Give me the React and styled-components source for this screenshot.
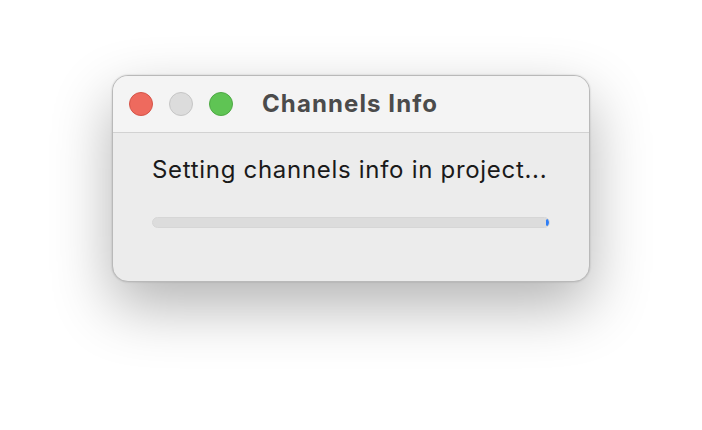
import React from 'react'
import styled, { createGlobalStyle } from 'styled-components'

const GlobalStyle = createGlobalStyle`
  html, body {
    margin: 0;
    padding: 0;
    background: #ffffff;
    font-family: Inter, "Liberation Sans", sans-serif;
  }
`

const Page = styled.div`
  width: 702px;
  height: 430px;
  display: flex;
  justify-content: center;
  align-items: flex-start;
  padding-top: 75px;
  box-sizing: border-box;
`

const Window = styled.div`
  width: 478px;
  height: 207px;
  box-sizing: border-box;
  border-radius: 16px;
  border: 1px solid #b9b9b9;
  background: #ececec;
  box-shadow: 0 24px 60px rgba(0, 0, 0, 0.3), 0 0 2px rgba(0, 0, 0, 0.2);
  overflow: hidden;
  display: flex;
  flex-direction: column;
`

const TitleBar = styled.div`
  height: 56px;
  flex-shrink: 0;
  background: #f4f4f4;
  border-bottom: 1px solid #d2d2d2;
  display: flex;
  align-items: center;
  padding-left: 16px;
`

const Lights = styled.div`
  display: flex;
  gap: 16px;
`

const Light = styled.span`
  width: 24px;
  height: 24px;
  border-radius: 50%;
  box-sizing: border-box;
  background: ${p => p.$bg};
  border: 1px solid ${p => p.$edge};
`

const Title = styled.div`
  margin-left: 29px;
  font-size: 24px;
  line-height: 30px;
  font-weight: 700;
  color: #4b4b4b;
  letter-spacing: 1.1px;
`

const Body = styled.div`
  padding: 22px 39px 0 39px;
  display: flex;
  flex-direction: column;
`

const Message = styled.div`
  font-size: 24px;
  color: #1a1a1a;
  line-height: 30px;
  letter-spacing: 0.7px;
  white-space: nowrap;
`

const Track = styled.div`
  margin-top: 32px;
  height: 11px;
  border-radius: 6px;
  background: #dcdcdc;
  border: 1px solid #d6d6d6;
  box-sizing: border-box;
  position: relative;
  overflow: hidden;
`

const Fill = styled.div`
  position: absolute;
  right: 0;
  top: 1px;
  bottom: 1px;
  width: 3px;
  border-radius: 2px;
  background: #2f7ef6;
`

export default function App() {
  return (
    <>
      <GlobalStyle />
      <Page>
        <Window>
          <TitleBar>
            <Lights>
              <Light $bg="#ee6a5e" $edge="#d55448" />
              <Light $bg="#dcdcdc" $edge="#c6c6c6" />
              <Light $bg="#5fc454" $edge="#4ea944" />
            </Lights>
            <Title>Channels Info</Title>
          </TitleBar>
          <Body>
            <Message>Setting channels info in project...</Message>
            <Track>
              <Fill />
            </Track>
          </Body>
        </Window>
      </Page>
    </>
  )
}
